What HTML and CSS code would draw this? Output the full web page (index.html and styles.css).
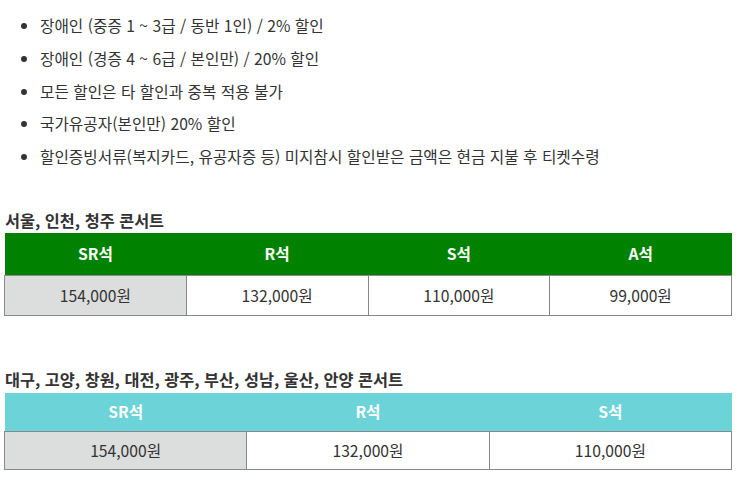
FILE: index.html
```html
<!DOCTYPE html>
<html lang="ko">
<head>
<meta charset="utf-8">
<link rel="stylesheet" href="styles.css">
</head>
<body>
<div class="page">
  <ul class="notes">
    <li>장애인 (중증 1 ~ 3급 / 동반 1인) / 2% 할인</li>
    <li>장애인 (경증 4 ~ 6급 / 본인만) / 20% 할인</li>
    <li>모든 할인은 타 할인과 중복 적용 불가</li>
    <li>국가유공자(본인만) 20% 할인</li>
    <li>할인증빙서류(복지카드, 유공자증 등) 미지참시 할인받은 금액은 현금 지불 후 티켓수령</li>
  </ul>

  <h3 class="title t1">서울, 인천, 청주 콘서트</h3>
  <table class="price green">
    <thead>
      <tr><th>SR석</th><th>R석</th><th>S석</th><th>A석</th></tr>
    </thead>
    <tbody>
      <tr><td class="first">154,000원</td><td>132,000원</td><td>110,000원</td><td>99,000원</td></tr>
    </tbody>
  </table>

  <h3 class="title t2">대구, 고양, 창원, 대전, 광주, 부산, 성남, 울산, 안양 콘서트</h3>
  <table class="price cyan">
    <thead>
      <tr><th>SR석</th><th>R석</th><th>S석</th></tr>
    </thead>
    <tbody>
      <tr><td class="first">154,000원</td><td>132,000원</td><td>110,000원</td></tr>
    </tbody>
  </table>
</div>
</body>
</html>
```

FILE: styles.css
```css
html, body {
  margin: 0;
  padding: 0;
  background: #fff;
}
body {
  font-family: "Noto Sans CJK KR", "Noto Sans", sans-serif;
  color: #333;
}
.page {
  padding: 10px 14px 0 4px;
}
.notes {
  margin: 0;
  padding-left: 36px;
  font-size: 15.7px;
  line-height: 32.8px;
}
.notes li {
  margin: 0;
}
.title {
  margin: 0;
  font-size: 16.3px;
  font-weight: 700;
  line-height: 20px;
  color: #333;
  padding-left: 1px;
}
.t1 {
  margin-top: 36px;
  margin-bottom: 3px;
}
.t2 {
  margin-top: 53px;
  margin-bottom: 4px;
}
.price {
  width: 728px;
  border-collapse: collapse;
  table-layout: fixed;
  font-size: 15.7px;
}
.price th {
  color: #fff;
  font-weight: 700;
  text-align: center;
  padding: 0;
}
.green th {
  background: #008200;
  height: 42px;
}
.cyan th {
  background: #6cd3d9;
  height: 38px;
}
.price td {
  border: 1px solid #888;
  text-align: center;
  padding: 0;
  color: #333;
}
.green td { height: 39px; }
.cyan td { height: 37px; }
.price td.first {
  background: #dcdddd;
}
```
